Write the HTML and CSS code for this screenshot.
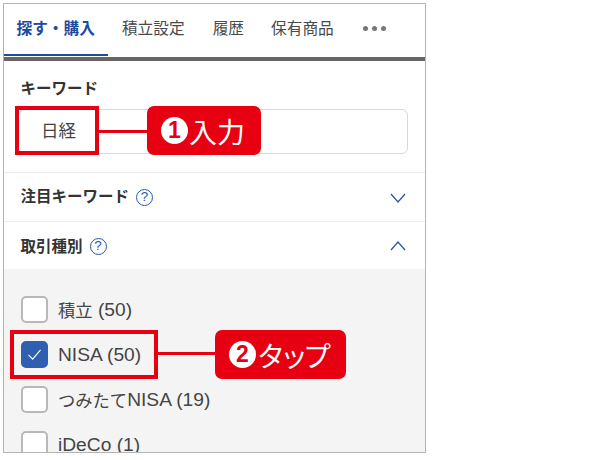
FILE: index.html
```html
<!DOCTYPE html>
<html lang="ja">
<head>
<meta charset="utf-8">
<title>探す・購入</title>
<link rel="stylesheet" href="styles.css">
</head>
<body>
<div class="stage">
  <main class="phone">
    <nav class="tabs">
      <span class="tab tab-active">探す・購入</span>
      <span class="tab tab-2">積立設定</span>
      <span class="tab tab-3">履歴</span>
      <span class="tab tab-4">保有商品</span>
      <span class="more"><i></i><i></i><i></i></span>
    </nav>
    <section class="keyword">
      <h2 class="label">キーワード</h2>
      <div class="input">日経</div>
    </section>
    <section class="row">
      <h2 class="label">注目キーワード</h2>
      <span class="help">?</span>
      <svg class="chev" viewBox="0 0 16 10"><path d="M1 1 8 9 15 1"/></svg>
    </section>
    <section class="row row-open">
      <h2 class="label">取引種別</h2>
      <span class="help">?</span>
      <svg class="chev" viewBox="0 0 16 10"><path d="M1 9 8 1 15 9"/></svg>
    </section>
    <section class="options">
      <div class="option"><span class="box"></span>積立<span class="latin">&nbsp;(50)</span></div>
      <div class="option"><span class="box box-on"><svg viewBox="0 0 16 14"><path d="M1.5 7.5 6 12 14.5 2"/></svg></span><span class="latin">NISA (50)</span></div>
      <div class="option"><span class="box"></span>つみたて<span class="latin">NISA (19)</span></div>
      <div class="option"><span class="box"></span><span class="latin">iDeCo (1)</span></div>
    </section>
  </main>

  <div class="mark mark-1"></div>
  <div class="wire wire-1"></div>
  <div class="callout callout-1"><span class="num">1</span>入力</div>
  <div class="mark mark-2"></div>
  <div class="wire wire-2"></div>
  <div class="callout callout-2"><span class="num">2</span><span class="tap">タップ</span></div>
</div>
</body>
</html>
```
FILE: styles.css
```css
* { box-sizing: border-box; }
html, body { margin: 0; padding: 0; background: #fff; }
body { font-family: "Liberation Sans", "Noto Sans CJK JP", sans-serif; color: #3c3c3c; }
.stage { position: relative; width: 600px; height: 460px; overflow: hidden; }

.phone {
  position: absolute; left: 3px; top: 3px; width: 423px; height: 450px;
  border: 1px solid #b4b4b4; overflow: hidden; background: #fff;
  display: flex; flex-direction: column;
}

.tabs {
  height: 57px; flex: none; display: flex; align-items: center;
  border-bottom: 4px solid #666; position: relative; font-size: 15.7px;
  padding-bottom: 6px;
}
.tab { white-space: nowrap; color: #4a4a4a; }
.tab-active { color: #1d4ba0; font-weight: 700; margin-left: 12.5px; position: relative; }
.tab-active::after {
  content: ""; position: absolute; left: -13.5px; width: 105px; bottom: -17px; height: 2px; background: #1d4ba0;
}
.tab-2 { margin-left: 27px; }
.tab-3 { margin-left: 28px; }
.tab-4 { margin-left: 27px; }
.more { display: flex; gap: 4px; margin-left: 29px; padding-top: 1px; }
.more i { width: 5px; height: 5px; border-radius: 50%; background: #777; }

.label { margin: 0; font-size: 15.5px; font-weight: 700; color: #333; line-height: 20px; }

.keyword { height: 112px; flex: none; padding: 18px 17px 0 16.5px; border-bottom: 1px solid #ececec; }
.input {
  margin: 10px 0 0 -2.5px; height: 45px; width: 390px; border: 1px solid #d8d8d8; border-radius: 6px;
  padding-left: 22px; font-size: 17.5px; line-height: 43px; color: #444;
}

.row {
  height: 49px; flex: none; display: flex; align-items: center; padding: 0 16.5px;
  border-bottom: 1px solid #ececec; position: relative;
}
.row-open { height: 47px; border-bottom: 0; padding-top: 2px; }
.help {
  width: 17px; height: 17px; margin-left: 7px; border: 1.5px solid #2a57ab; border-radius: 50%;
  color: #2a57ab; font-size: 13.5px; line-height: 14px; text-align: center;
}
.chev { position: absolute; left: 386px; top: 20px; width: 16px; height: 10px; }
.row-open .chev { top: 19px; }
.chev path { fill: none; stroke: #2a57ab; stroke-width: 1.3; }

.options { flex: 1; background: #f4f4f4; padding-top: 18px; }
.option { height: 45px; display: flex; align-items: center; padding-left: 17px; font-size: 17.3px; color: #444; white-space: nowrap; }
.latin { font-size: 19.2px; }
.box {
  width: 27px; height: 27px; flex: none; margin-right: 10px; background: #fff;
  border: 2px solid #b8b8b8; border-radius: 5px; display: flex; align-items: center; justify-content: center;
}
.box-on { background: #2f5fb1; border-color: #2f5fb1; }
.box svg { width: 15px; height: 13px; }
.box svg path { fill: none; stroke: #fff; stroke-width: 1.2; }

.mark { position: absolute; border: 4.5px solid #e60012; }
.mark-1 { left: 15px; top: 106px; width: 83.5px; height: 49px; }
.mark-2 { left: 10px; top: 330px; width: 148px; height: 49px; }
.wire { position: absolute; height: 3px; background: #e60012; }
.wire-1 { left: 98px; top: 130px; width: 50px; }
.wire-2 { left: 158px; top: 352px; width: 57px; }
.callout {
  position: absolute; height: 49px; background: #e60012; border-radius: 7px; color: #fff;
  display: flex; align-items: center; font-size: 28px; line-height: 1; white-space: nowrap;
  font-family: "Noto Sans CJK JP", sans-serif; font-weight: 400;
}
.callout-1 { left: 147px; top: 106px; width: 114px; padding-left: 14px; }
.callout-2 { left: 215px; top: 330px; width: 131px; padding-left: 14px; }
.tap { letter-spacing: -5px; }
.num {
  width: 27px; height: 27px; border-radius: 50%; background: #fff; color: #e60012; margin-right: 1px;
  font: 700 23px/27px "Liberation Sans", sans-serif; text-align: center; flex: none;
}
```
